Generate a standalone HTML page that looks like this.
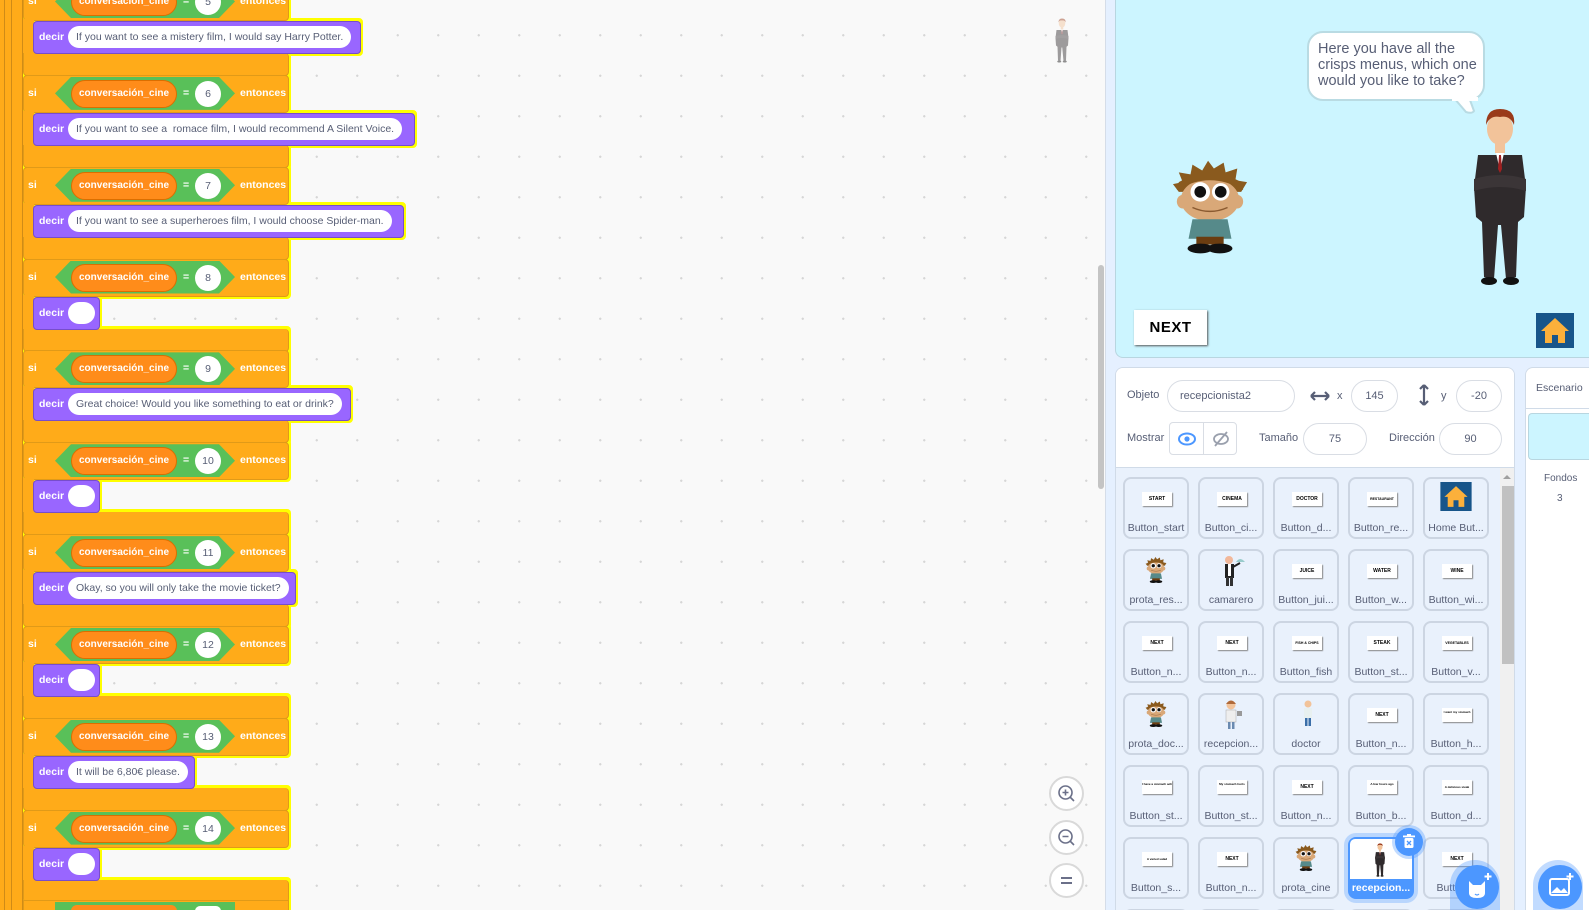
<!DOCTYPE html>
<html><head><meta charset="utf-8"><style>
*{box-sizing:border-box;margin:0;padding:0}
html,body{width:1589px;height:910px;overflow:hidden}
body{position:relative;font-family:"Liberation Sans",Arial,sans-serif;background:#f9f9f9}
#wrap{position:absolute;left:0;top:0;width:1589px;height:910px;overflow:hidden}
.ws{position:absolute;left:0;top:0;width:1105px;height:910px;background-color:#f9f9f9;background-image:radial-gradient(circle,#d6d6d6 1px,transparent 1.3px);background-size:40.5px 40.5px;background-position:13px 15px}
.stack{position:absolute;left:0;top:0;width:420px;height:910px;overflow:hidden}
.inner{position:absolute;left:0;top:0;filter:drop-shadow(2.5px 0 0 #ff0) drop-shadow(-2.5px 0 0 #ff0) drop-shadow(0 2.5px 0 #ff0) drop-shadow(0 -2.5px 0 #ff0)}
.bars{position:absolute;left:0;top:0;width:23px;height:910px;background:#ffab19;border-right:1px solid #cf8b17}
.bars i{position:absolute;top:0;height:910px;width:1px;background:#cf8b17}
.blk{position:absolute;left:0;width:1px;height:92px}
.hd{position:absolute;left:23px;top:0;width:266px;height:38px;background:#ffab19;border:1px solid #e09a18;border-radius:4px}
.st{position:absolute;left:23px;top:36px;width:11px;height:38px;background:#ffab19}
.arm{position:absolute;left:23px;top:70px;width:266px;height:23px;background:#ffab19;border:1px solid #e09a18;border-top:none;border-radius:0 4px 4px 4px}
.si{position:absolute;left:4px;top:11px;color:#fff;font-size:10.5px;font-weight:bold}
.hex{position:absolute;left:31px;top:1px;width:180px;height:33px;background:#59c059;clip-path:polygon(16px 0,164px 0,180px 50%,164px 100%,16px 100%,0 50%)}
.rep{position:absolute;left:47px;top:4px;width:106px;height:28px;background:#ff8c1a;border:1px solid #db6e00;border-radius:14px;color:#fff;font-size:10px;font-weight:bold;line-height:26px;padding-left:7px;white-space:nowrap}
.eq{position:absolute;left:159px;top:11px;color:#fff;font-size:10.5px;font-weight:bold}
.num{position:absolute;left:171px;top:5px;width:26px;height:26px;background:#fff;border-radius:13px;color:#575e75;font-size:10.5px;line-height:26px;text-align:center}
.ent{position:absolute;left:216px;top:11px;color:#fff;font-size:10.5px;font-weight:bold}
.dc{position:absolute;left:33px;top:38px;height:33px;background:#9966ff;border:1px solid #774dcb;border-radius:4px}
.dc b{position:absolute;left:5px;top:9px;color:#fff;font-size:10.5px}
.pill{position:absolute;left:34px;top:4px;height:22px;background:#fff;border-radius:11px;color:#575e75;font-size:10.5px;line-height:22px;padding:0 8px;white-space:nowrap}
.rp{position:absolute;left:1105px;top:0;width:484px;height:910px;background:#e5f0ff;border-left:1px solid #d5dde8}
.abs{position:absolute}
.lbl{position:absolute;font-size:11px;color:#575e75}
.inp{position:absolute;height:32px;background:#fff;border:1px solid #d9dde4;border-radius:16px;font-size:11px;color:#575e75;line-height:30px;text-align:center}
.tile{position:absolute;width:66px;height:62px;border:2px solid #ccd5e2;border-radius:8px;background:#e9f1fc}
.tile span{position:absolute;left:0;right:0;top:43px;text-align:center;font-size:10.5px;color:#575e75;white-space:nowrap}
.btn{position:absolute;left:17px;top:13px;width:30px;height:14px;background:#fff;box-shadow:1px 1px 1px #888;font-size:5px;font-weight:bold;text-align:center;line-height:14px;color:#000;overflow:hidden;white-space:nowrap}
.tile svg{position:absolute;left:18px;top:3px}
.zc{position:absolute;left:1049px;width:35px;height:35px;border-radius:50%;background:#fff;border:2px solid #d9d9d9}
.grid{position:absolute;left:1115px;top:367px;width:400px;height:543px;background:#e9f1fc;border:1px solid #d0dbe8;border-bottom:none;border-radius:8px 8px 0 0;overflow:hidden}
</style></head><body><div id="wrap">
<svg width="0" height="0" style="position:absolute">
<defs>
<symbol id="boy" viewBox="0 0 80 95">
<path d="M8 32 L2 24 L12 22 L8 12 L20 14 L22 4 L32 10 L38 0 L44 8 L54 2 L56 12 L68 8 L66 20 L78 22 L72 32 Z" fill="#8a5a1e"/>
<ellipse cx="40" cy="40" rx="30" ry="22" fill="#d9a878"/>
<ellipse cx="12" cy="42" rx="6" ry="7" fill="#d9a878"/><ellipse cx="68" cy="42" rx="6" ry="7" fill="#d9a878"/>
<path d="M6 30 Q40 10 74 30 L72 22 Q40 4 8 22Z" fill="#8a5a1e"/>
<circle cx="30" cy="32" r="10" fill="#fff"/><circle cx="51" cy="32" r="9" fill="#fff"/>
<circle cx="30" cy="32" r="6" fill="#111"/><circle cx="51" cy="32" r="6" fill="#111"/>
<path d="M22 48 Q40 56 58 48" stroke="#8a5a30" fill="none" stroke-width="1.5"/>
<path d="M22 60 L58 60 L62 80 L18 80Z" fill="#568a8a"/>
<rect x="26" y="78" width="28" height="8" fill="#6b3d10"/>
<ellipse cx="30" cy="90" rx="13" ry="5" fill="#111"/><ellipse cx="50" cy="90" rx="13" ry="5" fill="#111"/>
</symbol>
<symbol id="man" viewBox="0 0 60 180">
<ellipse cx="30" cy="22" rx="13" ry="16" fill="#f2c39a"/>
<path d="M16 18 Q16 2 30 2 Q46 2 44 18 Q40 8 30 10 Q20 8 16 18Z" fill="#9a3a1a"/>
<rect x="25" y="36" width="10" height="10" fill="#f2c39a"/>
<path d="M8 48 L52 48 L56 80 L54 110 L48 115 L46 170 L36 172 L31 118 L28 118 L24 172 L14 170 L12 115 L6 110 L4 80Z" fill="#2f2a2c"/>
<path d="M26 46 L34 46 L30 64Z" fill="#fff"/><path d="M29 48 L31 48 L32 62 L30 66 L28 62Z" fill="#a02020"/>
<path d="M4 72 Q30 64 56 72 L56 84 Q30 76 4 84Z" fill="#3b3537"/>
<ellipse cx="19" cy="174" rx="8" ry="4" fill="#111"/><ellipse cx="41" cy="174" rx="8" ry="4" fill="#111"/>
</symbol>
<symbol id="home" viewBox="0 0 38 35">
<rect width="38" height="35" fill="#17558a"/>
<path d="M19 5 L33 18 L29 18 L29 30 L22 30 L22 22 L16 22 L16 30 L9 30 L9 18 L5 18Z" fill="#fbb03b"/>
</symbol>
</defs></svg>

<div class="ws">
<svg class="abs" style="left:1053px;top:18px" width="18" height="45" viewBox="0 0 60 180" opacity="0.45"><use href="#man"/></svg>
</div>

<div class="stack"><div class="inner">
<div class="bars"><i style="left:4px"></i><i style="left:11px"></i></div>

<div class="blk" style="top:-17px"><div class="hd"><span class="si">si</span><div class="hex"></div><div class="rep">conversación_cine</div><span class="eq">=</span><div class="num">5</div><span class="ent">entonces</span></div><div class="st"></div><div class="arm"></div><div class="dc" style="width:328px"><b>decir</b><div class="pill">If you want to see a mistery film, I would say Harry Potter.</div></div></div>

<div class="blk" style="top:74.85px"><div class="hd"><span class="si">si</span><div class="hex"></div><div class="rep">conversación_cine</div><span class="eq">=</span><div class="num">6</div><span class="ent">entonces</span></div><div class="st"></div><div class="arm"></div><div class="dc" style="width:382px"><b>decir</b><div class="pill">If you want to see a &nbsp;romace film, I would recommend A Silent Voice.</div></div></div>

<div class="blk" style="top:166.7px"><div class="hd"><span class="si">si</span><div class="hex"></div><div class="rep">conversación_cine</div><span class="eq">=</span><div class="num">7</div><span class="ent">entonces</span></div><div class="st"></div><div class="arm"></div><div class="dc" style="width:371px"><b>decir</b><div class="pill">If you want to see a superheroes film, I would choose Spider-man.</div></div></div>

<div class="blk" style="top:258.55px"><div class="hd"><span class="si">si</span><div class="hex"></div><div class="rep">conversación_cine</div><span class="eq">=</span><div class="num">8</div><span class="ent">entonces</span></div><div class="st"></div><div class="arm"></div><div class="dc" style="width:67px"><b>decir</b><div class="pill" style="width:27px"></div></div></div>

<div class="blk" style="top:350.4px"><div class="hd"><span class="si">si</span><div class="hex"></div><div class="rep">conversación_cine</div><span class="eq">=</span><div class="num">9</div><span class="ent">entonces</span></div><div class="st"></div><div class="arm"></div><div class="dc" style="width:318px"><b>decir</b><div class="pill">Great choice! Would you like something to eat or drink?</div></div></div>

<div class="blk" style="top:442.25px"><div class="hd"><span class="si">si</span><div class="hex"></div><div class="rep">conversación_cine</div><span class="eq">=</span><div class="num">10</div><span class="ent">entonces</span></div><div class="st"></div><div class="arm"></div><div class="dc" style="width:67px"><b>decir</b><div class="pill" style="width:27px"></div></div></div>

<div class="blk" style="top:534.1px"><div class="hd"><span class="si">si</span><div class="hex"></div><div class="rep">conversación_cine</div><span class="eq">=</span><div class="num">11</div><span class="ent">entonces</span></div><div class="st"></div><div class="arm"></div><div class="dc" style="width:263px"><b>decir</b><div class="pill">Okay, so you will only take the movie ticket?</div></div></div>

<div class="blk" style="top:625.95px"><div class="hd"><span class="si">si</span><div class="hex"></div><div class="rep">conversación_cine</div><span class="eq">=</span><div class="num">12</div><span class="ent">entonces</span></div><div class="st"></div><div class="arm"></div><div class="dc" style="width:67px"><b>decir</b><div class="pill" style="width:27px"></div></div></div>

<div class="blk" style="top:717.8px"><div class="hd"><span class="si">si</span><div class="hex"></div><div class="rep">conversación_cine</div><span class="eq">=</span><div class="num">13</div><span class="ent">entonces</span></div><div class="st"></div><div class="arm"></div><div class="dc" style="width:162px"><b>decir</b><div class="pill">It will be 6,80€ please.</div></div></div>

<div class="blk" style="top:809.65px"><div class="hd"><span class="si">si</span><div class="hex"></div><div class="rep">conversación_cine</div><span class="eq">=</span><div class="num">14</div><span class="ent">entonces</span></div><div class="st"></div><div class="arm"></div><div class="dc" style="width:67px"><b>decir</b><div class="pill" style="width:27px"></div></div></div>

<div class="abs" style="left:23px;top:900px;width:266px;height:10px;background:#ffab19;border:1px solid #e09a18;border-bottom:none;overflow:hidden"><div class="abs" style="left:31px;top:1px;width:180px;height:9px;background:#59c059"></div><div class="abs" style="left:47px;top:4px;width:106px;height:6px;background:#ff8c1a;border-radius:14px 14px 0 0"></div><div class="abs" style="left:171px;top:5px;width:26px;height:5px;background:#fff;border-radius:13px 13px 0 0"></div></div>
</div></div>

<div class="abs" style="left:1098px;top:265px;width:6px;height:224px;background:#c4c4c4;border-radius:3px"></div>

<div class="zc" style="top:776px"><svg width="31" height="31" viewBox="0 0 31 31"><circle cx="14.5" cy="14.5" r="6.5" fill="none" stroke="#6b7089" stroke-width="1.6"/><path d="M19 19 L23 23 M14.5 11.5 V17.5 M11.5 14.5 H17.5" stroke="#6b7089" stroke-width="1.6"/></svg></div>
<div class="zc" style="top:820px"><svg width="31" height="31" viewBox="0 0 31 31"><circle cx="14.5" cy="14.5" r="6.5" fill="none" stroke="#6b7089" stroke-width="1.6"/><path d="M19 19 L23 23 M11.5 14.5 H17.5" stroke="#6b7089" stroke-width="1.6"/></svg></div>
<div class="zc" style="top:863px"><svg width="31" height="31" viewBox="0 0 31 31"><path d="M10 13 H21 M10 18 H21" stroke="#6b7089" stroke-width="2"/></svg></div>

<div class="rp"></div>
<!-- stage -->
<div class="abs" style="left:1115px;top:0;width:474px;height:358px;background:#ccf5ff;border:1px solid #b8d6e0;border-top:none;border-right:none;border-radius:0 0 0 8px"></div>
<div class="abs" style="left:1307px;top:31px;width:178px;height:70px;background:#fff;border:2px solid #b9dbe3;border-radius:16px"></div>
<svg class="abs" style="left:1452px;top:97px" width="30" height="18"><path d="M2 1 L14 15 Q20 17 22 14 L18 3" fill="#fff" stroke="#b9dbe3" stroke-width="2"/><rect x="0" y="0" width="26" height="4" fill="#fff"/></svg>
<div class="abs" style="left:1318px;top:41px;font-size:14.5px;line-height:16px;color:#575e75;width:170px">Here you have all the crisps menus, which one would you like to take?</div>
<svg class="abs" style="left:1171px;top:160px" width="78" height="94"><use href="#boy"/></svg>
<svg class="abs" style="left:1469px;top:107px" width="62" height="180" viewBox="0 0 60 180"><use href="#man"/></svg>
<div class="abs" style="left:1134px;top:310px;width:73px;height:35px;background:#fff;box-shadow:1px 1px 2px #555;font-weight:900;font-size:15px;text-align:center;line-height:35px;letter-spacing:0.5px;color:#000">NEXT</div>
<svg class="abs" style="left:1536px;top:313px" width="38" height="35"><use href="#home"/></svg>

<!-- sprite info + grid -->
<div class="grid">
<div class="abs" style="left:0;top:0;width:400px;height:100px;background:#fff;border-bottom:1px solid #d0dbe8"></div>
<div class="abs" style="left:384px;top:100px;width:15px;height:443px;background:#f0f0f0"></div>
<div class="abs" style="left:387px;top:107px;width:0;height:0;border-left:4px solid transparent;border-right:4px solid transparent;border-bottom:4px solid #a0a0a0"></div>
<div class="abs" style="left:386px;top:118px;width:12px;height:178px;background:#c1c1c1"></div>
<div class="tile" style="left:7px;top:541px"></div><div class="tile" style="left:82px;top:541px"></div><div class="tile" style="left:157px;top:541px"></div><div class="tile" style="left:232px;top:541px"></div><div class="tile" style="left:307px;top:541px"></div>
</div>
<span class="lbl" style="left:1127px;top:389px">Objeto</span>
<div class="inp" style="left:1167px;top:380px;width:128px;text-align:left;padding-left:12px">recepcionista2</div>
<svg class="abs" style="left:1310px;top:390px" width="20" height="12"><path d="M1 6 H19 M1 6 L5 2 M1 6 L5 10 M19 6 L15 2 M19 6 L15 10" stroke="#575e75" stroke-width="2.2" fill="none"/></svg>
<span class="lbl" style="left:1337px;top:390px">x</span>
<div class="inp" style="left:1351px;top:380px;width:47px">145</div>
<svg class="abs" style="left:1418px;top:384px" width="12" height="22"><path d="M6 1 V21 M6 1 L2 5 M6 1 L10 5 M6 21 L2 17 M6 21 L10 17" stroke="#575e75" stroke-width="2.2" fill="none"/></svg>
<span class="lbl" style="left:1441px;top:390px">y</span>
<div class="inp" style="left:1456px;top:380px;width:46px">-20</div>
<span class="lbl" style="left:1127px;top:432px">Mostrar</span>
<div class="abs" style="left:1169px;top:422px;width:68px;height:33px;border:1px solid #d9dde4;border-radius:4px;background:#fff"><div class="abs" style="left:33px;top:0;width:1px;height:31px;background:#d9dde4"></div>
<svg class="abs" style="left:8px;top:8px" width="18" height="16"><ellipse cx="9" cy="8" rx="8" ry="5.5" fill="none" stroke="#4c97ff" stroke-width="2"/><circle cx="9" cy="8" r="2.6" fill="#4c97ff"/></svg>
<svg class="abs" style="left:42px;top:8px" width="18" height="16"><ellipse cx="9" cy="8" rx="7" ry="5" fill="none" stroke="#9aa0ad" stroke-width="1.8"/><path d="M3 15 L15 1" stroke="#9aa0ad" stroke-width="1.8"/></svg></div>
<span class="lbl" style="left:1259px;top:432px">Tamaño</span>
<div class="inp" style="left:1303px;top:423px;width:64px">75</div>
<span class="lbl" style="left:1389px;top:432px">Dirección</span>
<div class="inp" style="left:1439px;top:423px;width:63px">90</div>

<!-- tiles row1 -->
<div class="tile" style="left:1123px;top:477px"><div class="btn">START</div><span>Button_start</span></div>
<div class="tile" style="left:1198px;top:477px"><div class="btn">CINEMA</div><span>Button_ci...</span></div>
<div class="tile" style="left:1273px;top:477px"><div class="btn">DOCTOR</div><span>Button_d...</span></div>
<div class="tile" style="left:1348px;top:477px"><div class="btn" style="font-size:3.5px">RESTAURANT</div><span>Button_re...</span></div>
<div class="tile" style="left:1423px;top:477px"><svg style="left:15px;top:3px" width="32" height="29" viewBox="0 0 38 35"><use href="#home"/></svg><span>Home But...</span></div>
<!-- row2 -->
<div class="tile" style="left:1123px;top:549px"><svg style="left:20px;top:6px" width="22" height="26" viewBox="0 0 80 95"><use href="#boy"/></svg><span>prota_res...</span></div>
<div class="tile" style="left:1198px;top:549px"><svg style="left:20px;top:4px" width="26" height="32"><circle cx="9" cy="5" r="4" fill="#f2b89a"/><rect x="5" y="9" width="9" height="14" fill="#222"/><rect x="8" y="9" width="3" height="12" fill="#fff"/><rect x="6" y="22" width="3" height="9" fill="#333"/><rect x="10" y="22" width="3" height="9" fill="#333"/><path d="M13 12 L20 8" stroke="#222" stroke-width="2"/><path d="M16 7 Q20 1 25 7Z" fill="#9cc"/></svg><span>camarero</span></div>
<div class="tile" style="left:1273px;top:549px"><div class="btn">JUICE</div><span>Button_jui...</span></div>
<div class="tile" style="left:1348px;top:549px"><div class="btn">WATER</div><span>Button_w...</span></div>
<div class="tile" style="left:1423px;top:549px"><div class="btn">WINE</div><span>Button_wi...</span></div>
<!-- row3 -->
<div class="tile" style="left:1123px;top:621px"><div class="btn">NEXT</div><span>Button_n...</span></div>
<div class="tile" style="left:1198px;top:621px"><div class="btn">NEXT</div><span>Button_n...</span></div>
<div class="tile" style="left:1273px;top:621px"><div class="btn" style="font-size:3.5px">FISH &amp; CHIPS</div><span>Button_fish</span></div>
<div class="tile" style="left:1348px;top:621px"><div class="btn">STEAK</div><span>Button_st...</span></div>
<div class="tile" style="left:1423px;top:621px"><div class="btn" style="font-size:3.5px">VEGETABLES</div><span>Button_v...</span></div>
<!-- row4 -->
<div class="tile" style="left:1123px;top:693px"><svg style="left:20px;top:6px" width="22" height="26" viewBox="0 0 80 95"><use href="#boy"/></svg><span>prota_doc...</span></div>
<div class="tile" style="left:1198px;top:693px"><svg style="left:22px;top:4px" width="22" height="30"><circle cx="9" cy="6" r="4.5" fill="#f2c39a"/><path d="M4 5 Q9 -2 14 5" fill="#b06a3a"/><rect x="4" y="11" width="10" height="12" fill="#eee" stroke="#aaa" stroke-width=".5"/><rect x="6" y="23" width="2.5" height="7" fill="#6a8ab0"/><rect x="10" y="23" width="2.5" height="7" fill="#6a8ab0"/><rect x="15" y="12" width="5" height="5" fill="#999"/></svg><span>recepcion...</span></div>
<div class="tile" style="left:1273px;top:693px"><svg style="left:26px;top:5px" width="14" height="28"><circle cx="7" cy="4" r="3.5" fill="#f2c39a"/><rect x="3" y="8" width="8" height="10" fill="#e8f0f0"/><rect x="4" y="18" width="2.5" height="8" fill="#3a6ea8"/><rect x="7.5" y="18" width="2.5" height="8" fill="#3a6ea8"/></svg><span>doctor</span></div>
<div class="tile" style="left:1348px;top:693px"><div class="btn">NEXT</div><span>Button_n...</span></div>
<div class="tile" style="left:1423px;top:693px"><div class="btn" style="font-size:3px;line-height:5px;padding-top:2px">I want my stomach</div><span>Button_h...</span></div>
<!-- row5 -->
<div class="tile" style="left:1123px;top:765px"><div class="btn" style="font-size:3px;line-height:5px;padding-top:2px">I have a stomach ache</div><span>Button_st...</span></div>
<div class="tile" style="left:1198px;top:765px"><div class="btn" style="font-size:3px;line-height:5px;padding-top:2px">My stomach hurts</div><span>Button_st...</span></div>
<div class="tile" style="left:1273px;top:765px"><div class="btn">NEXT</div><span>Button_n...</span></div>
<div class="tile" style="left:1348px;top:765px"><div class="btn" style="font-size:3px;line-height:5px;padding-top:2px">A few hours ago</div><span>Button_b...</span></div>
<div class="tile" style="left:1423px;top:765px"><div class="btn" style="font-size:3px">A delicious steak</div><span>Button_d...</span></div>
<!-- row6 -->
<div class="tile" style="left:1123px;top:837px"><div class="btn" style="font-size:3px">A varied salad</div><span>Button_s...</span></div>
<div class="tile" style="left:1198px;top:837px"><div class="btn">NEXT</div><span>Button_n...</span></div>
<div class="tile" style="left:1273px;top:837px"><svg style="left:20px;top:6px" width="22" height="26" viewBox="0 0 80 95"><use href="#boy"/></svg><span>prota_cine</span></div>
<div class="tile" style="left:1348px;top:837px;border:2px solid #4c97ff;background:#4c97ff;box-shadow:0 0 0 4px rgba(76,151,255,.3)"><div class="abs" style="left:0;top:0;width:62px;height:40px;background:#fff;border-radius:5px 5px 0 0"></div><svg style="left:24px;top:4px" width="12" height="34" viewBox="0 0 60 180"><use href="#man"/></svg><span style="color:#fff;font-weight:bold">recepcion...</span></div>
<div class="tile" style="left:1423px;top:837px"><div class="btn">NEXT</div><span>Button...</span></div>

<!-- trash -->
<div class="abs" style="left:1395px;top:828px;width:28px;height:28px;border-radius:50%;background:#4c97ff;box-shadow:0 0 0 3px rgba(76,151,255,.35)"><svg width="28" height="28"><rect x="9.5" y="10" width="9" height="10" rx="1.5" fill="#fff"/><rect x="8" y="7.5" width="12" height="1.8" fill="#fff"/><rect x="12" y="6" width="4" height="2" fill="#fff"/><path d="M12 13 L16 17 M16 13 L12 17" stroke="#4c97ff" stroke-width="1.3"/></svg></div>

<!-- stage panel -->
<div class="abs" style="left:1525px;top:367px;width:64px;height:543px;background:#fff;border:1px solid #d0dbe8;border-right:none;border-bottom:none;border-radius:8px 0 0 0"></div>
<div class="abs" style="left:1525px;top:408px;width:64px;height:1px;background:#d0dbe8"></div>
<span class="lbl" style="left:1536px;top:382px;font-size:10.5px">Escenario</span>
<div class="abs" style="left:1528px;top:413px;width:61px;height:47px;background:#ccf5ff;border:1px solid #b8d6e0;border-right:none;border-radius:4px 0 0 4px"></div>
<span class="lbl" style="left:1544px;top:473px;font-size:10px">Fondos</span>
<span class="lbl" style="left:1557px;top:493px;font-size:10px">3</span>

<!-- add buttons -->
<div class="abs" style="left:1450px;top:860px;width:50px;height:50px;border-radius:25px 25px 0 0;background:rgba(76,151,255,.35);overflow:hidden"></div>
<div class="abs" style="left:1455px;top:865px;width:44px;height:44px;border-radius:50%;background:#4c97ff"><svg width="44" height="44"><path d="M14 16 L18 20 H26 L30 16 V28 Q30 33 22 33 Q14 33 14 28Z" fill="#fff"/><path d="M20 29 Q22 31 24 29" stroke="#4c97ff" stroke-width="1.2" fill="none"/><path d="M33 8 V15 M29.5 11.5 H36.5" stroke="#fff" stroke-width="2"/></svg></div>
<div class="abs" style="left:1533px;top:860px;width:50px;height:50px;border-radius:25px 25px 0 0;background:rgba(76,151,255,.35)"></div>
<div class="abs" style="left:1538px;top:865px;width:44px;height:44px;border-radius:50%;background:#4c97ff"><svg width="44" height="44"><rect x="12" y="14" width="19" height="16" rx="2" fill="none" stroke="#fff" stroke-width="2"/><path d="M13 28 L19 22 L23 26 L26 23 L30 28Z" fill="#fff"/><path d="M32 8 V15 M28.5 11.5 H35.5" stroke="#fff" stroke-width="2"/></svg></div>
</div></body></html>
